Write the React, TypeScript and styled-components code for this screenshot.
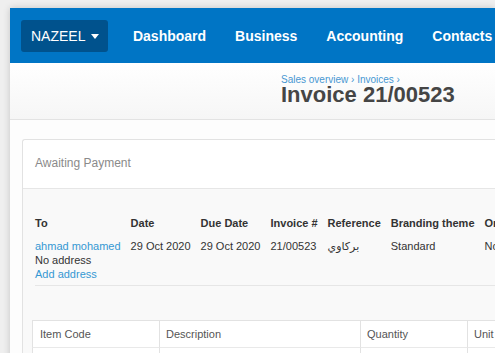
import React from "react";
import styled, { createGlobalStyle } from "styled-components";

const GlobalStyle = createGlobalStyle`
  html, body {
    margin: 0;
    padding: 0;
    background: #efefef;
    font-family: "Liberation Sans", Arial, "DejaVu Sans", sans-serif;
  }
  * { box-sizing: border-box; }
`;

const Page = styled.div`
  margin: 8px 0 0 10px;
  background: #fdfdfd;
  box-shadow: 0 0 7px rgba(0, 0, 0, 0.18);
  min-height: 345px;
  overflow: hidden;
  white-space: nowrap;
`;

const NavBar = styled.nav`
  height: 55px;
  background: #0075c5;
  display: flex;
  align-items: center;
  padding-left: 11px;
`;

const BrandButton = styled.div`
  height: 32px;
  padding: 0 9px 0 10px;
  background: #00528d;
  border-radius: 3px;
  color: #fff;
  font-size: 14px;
  display: flex;
  align-items: center;
  gap: 6px;
  flex-shrink: 0;
`;

const Caret = styled.span`
  display: inline-block;
  width: 0;
  height: 0;
  border-left: 4.5px solid transparent;
  border-right: 4.5px solid transparent;
  border-top: 5px solid #fff;
  margin-top: 1px;
`;

const NavLinks = styled.div`
  display: flex;
  margin-left: 10px;
`;

const NavLink = styled.a`
  color: #fff;
  font-weight: bold;
  font-size: 14px;
  padding: 0 14.5px;
  flex-shrink: 0;
`;

const PageHeader = styled.header`
  height: 57px;
  padding: 12px 0 0 271px;
  background: linear-gradient(#ffffff, #f6f6f6);
  border-bottom: 1px solid #e3e3e3;
`;

const Breadcrumb = styled.div`
  font-size: 10px;
  line-height: 10px;
  color: #4797d2;
`;

const Title = styled.h1`
  margin: 1px 0 0 0;
  font-size: 22px;
  line-height: 18px;
  font-weight: bold;
  color: #454545;
`;

const Main = styled.main`
  padding: 19px 0 0 12px;
`;

const Card = styled.section`
  border: 1px solid #e2e2e2;
  border-right: none;
  border-radius: 3px 0 0 0;
  background: #f9f9f9;
  min-height: 240px;
`;

const CardHeader = styled.div`
  height: 49px;
  padding: 0 0 2px 12px;
  display: flex;
  align-items: center;
  background: #fff;
  border-bottom: 1px solid #e6e6e6;
  border-radius: 3px 0 0 0;
  font-size: 12px;
  color: #8a8a8a;
`;

const CardBody = styled.div`
  padding: 27px 0 0 9px;
`;

const Details = styled.div`
  margin-left: 3px;
  padding-bottom: 4px;
  border-bottom: 1px solid #e6e6e6;
  display: grid;
  grid-template-columns: repeat(7, max-content);
  column-gap: 10px;
  row-gap: 9px;
  font-size: 11px;
  line-height: 14px;
  color: #333;
`;

const FieldLabel = styled.div`
  font-weight: bold;
  color: #333;
`;

const FieldValue = styled.div<{ $rtl?: boolean }>`
  display: flex;
  flex-direction: column;
  color: #333;
  direction: ${(p) => (p.$rtl ? "rtl" : "ltr")};
`;

const Link = styled.a`
  color: #3598d3;
`;

const ItemTable = styled.div`
  margin-top: 34px;
  display: grid;
  grid-template-columns: 127px 201px 107px 140px;
  background: #fff;
  border-top: 1px solid #e2e2e2;
  font-size: 11px;
  color: #555;
`;

const HeadCell = styled.div`
  height: 27px;
  padding-left: 6px;
  display: flex;
  align-items: center;
  border-left: 1px solid #e2e2e2;
  border-bottom: 1px solid #e9e9e9;

  &:first-child {
    padding-left: 7px;
  }
`;

const BodyCell = styled.div`
  height: 30px;
  border-left: 1px solid #e2e2e2;
`;

const detailCols = [
  { label: "To" },
  { label: "Date", value: "29 Oct 2020" },
  { label: "Due Date", value: "29 Oct 2020" },
  { label: "Invoice #", value: "21/00523" },
  { label: "Reference", value: "بركاوي" },
  { label: "Branding theme", value: "Standard" },
  { label: "Order #", value: "None" },
];

const itemCols = ["Item Code", "Description", "Quantity", "Unit Price"];

export default function App() {
  return (
    <>
      <GlobalStyle />
      <Page>
        <NavBar>
          <BrandButton>
            NAZEEL <Caret />
          </BrandButton>
          <NavLinks>
            <NavLink>Dashboard</NavLink>
            <NavLink>Business</NavLink>
            <NavLink>Accounting</NavLink>
            <NavLink>Contacts</NavLink>
          </NavLinks>
        </NavBar>
        <PageHeader>
          <Breadcrumb>Sales overview › Invoices ›</Breadcrumb>
          <Title>Invoice 21/00523</Title>
        </PageHeader>
        <Main>
          <Card>
            <CardHeader>Awaiting Payment</CardHeader>
            <CardBody>
              <Details>
                {detailCols.map((c) => (
                  <FieldLabel key={c.label}>{c.label}</FieldLabel>
                ))}
                <FieldValue>
                  <Link>ahmad mohamed</Link>
                  <span>No address</span>
                  <Link>Add address</Link>
                </FieldValue>
                {detailCols.slice(1).map((c) => (
                  <FieldValue key={c.label}>{c.value}</FieldValue>
                ))}
              </Details>
              <ItemTable>
                {itemCols.map((c) => (
                  <HeadCell key={c}>{c}</HeadCell>
                ))}
                {itemCols.map((c) => (
                  <BodyCell key={c} />
                ))}
              </ItemTable>
            </CardBody>
          </Card>
        </Main>
      </Page>
    </>
  );
}
